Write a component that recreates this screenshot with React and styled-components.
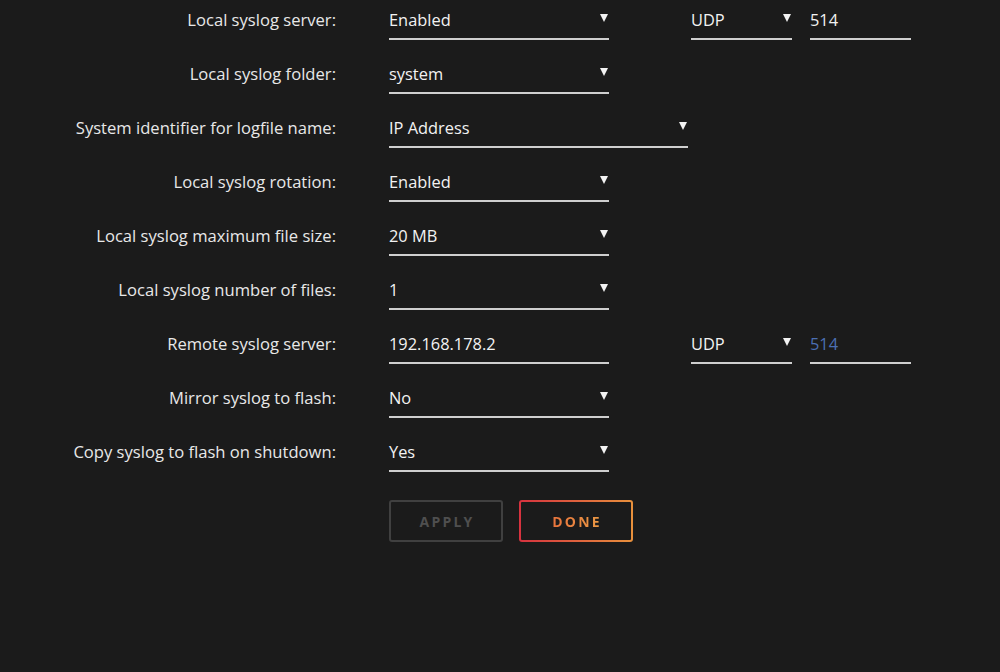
import styled, { createGlobalStyle } from "styled-components";

const GlobalStyle = createGlobalStyle`
  html, body {
    margin: 0;
    padding: 0;
    background: #1b1b1b;
  }
  body {
    font-family: "Open Sans", "Noto Sans", sans-serif;
    color: #eeeeee;
  }
`;

const rows = [
  { label: "Local syslog server:", value: "Enabled", select: true, extra: { proto: "UDP", port: "514" } },
  { label: "Local syslog folder:", value: "system", select: true },
  { label: "System identifier for logfile name:", value: "IP Address", select: true, wide: true },
  { label: "Local syslog rotation:", value: "Enabled", select: true },
  { label: "Local syslog maximum file size:", value: "20 MB", select: true },
  { label: "Local syslog number of files:", value: "1", select: true },
  { label: "Remote syslog server:", value: "192.168.178.2", extra: { proto: "UDP", port: "514", placeholder: true } },
  { label: "Mirror syslog to flash:", value: "No", select: true },
  { label: "Copy syslog to flash on shutdown:", value: "Yes", select: true },
];

const Arrow = () => (
  <svg width="8" height="9" viewBox="0 0 8 9">
    <path d="M0 1 L8 1 L4 9 Z" fill="#f2f2f2" />
  </svg>
);

const App = () => {
  return (
    <Page>
      <GlobalStyle />
      {rows.map((row) => (
        <Row key={row.label}>
          <Label>{row.label}</Label>
          <Fields>
            <Field $width={row.wide ? 299 : 220}>
              <span>{row.value}</span>
              {row.select && <Arrow />}
            </Field>
            {row.extra && (
              <>
                <Field $width={101} $gap={82}>
                  <span>{row.extra.proto}</span>
                  <Arrow />
                </Field>
                <Field $width={101} $gap={18} $muted={row.extra.placeholder}>
                  <span>{row.extra.port}</span>
                </Field>
              </>
            )}
          </Fields>
        </Row>
      ))}
      <Buttons>
        <Button disabled>Apply</Button>
        <DoneButton>
          <span>Done</span>
        </DoneButton>
      </Buttons>
    </Page>
  );
};

const Page = styled.div`
  width: 1000px;
  height: 672px;
  overflow: hidden;
`;

const Row = styled.div`
  display: flex;
  align-items: flex-start;
  height: 54px;
`;

const Label = styled.div`
  width: 336px;
  text-align: right;
  line-height: 40px;
  font-size: 16.6px;
  color: #e8e8e8;
`;

const Fields = styled.div`
  display: flex;
  margin-left: 53px;
`;

const Field = styled.div`
  width: ${(p) => p.$width}px;
  margin-left: ${(p) => p.$gap || 0}px;
  height: 38px;
  border-bottom: 2px solid #cfcfcf;
  box-sizing: content-box;
  display: flex;
  align-items: center;
  justify-content: space-between;
  font-size: 16.4px;
  color: ${(p) => (p.$muted ? "#4b6fb3" : "#f2f2f2")};

  span {
    padding-top: 1px;
  }

  svg {
    margin-right: 1px;
    margin-top: -3px;
  }
`;

const Buttons = styled.div`
  display: flex;
  gap: 16px;
  margin-left: 389px;
  margin-top: 14px;
`;

const Button = styled.button`
  width: 114px;
  height: 42px;
  box-sizing: border-box;
  background: transparent;
  border: 2px solid #404040;
  border-radius: 3px;
  font-family: "Open Sans", sans-serif;
  font-weight: 700;
  font-size: 14px;
  letter-spacing: 2.2px;
  text-transform: uppercase;
  color: #4f4f4f;
  padding: 0 0 0 2px;
`;

const DoneButton = styled(Button)`
  border: 2px solid transparent;
  background: linear-gradient(#1b1b1b, #1b1b1b) padding-box,
    linear-gradient(90deg, #d6323f, #e8913c) border-box;

  span {
    background: linear-gradient(90deg, #e8733c, #eb9a45);
    -webkit-background-clip: text;
    background-clip: text;
    color: transparent;
  }
`;

export default App;
